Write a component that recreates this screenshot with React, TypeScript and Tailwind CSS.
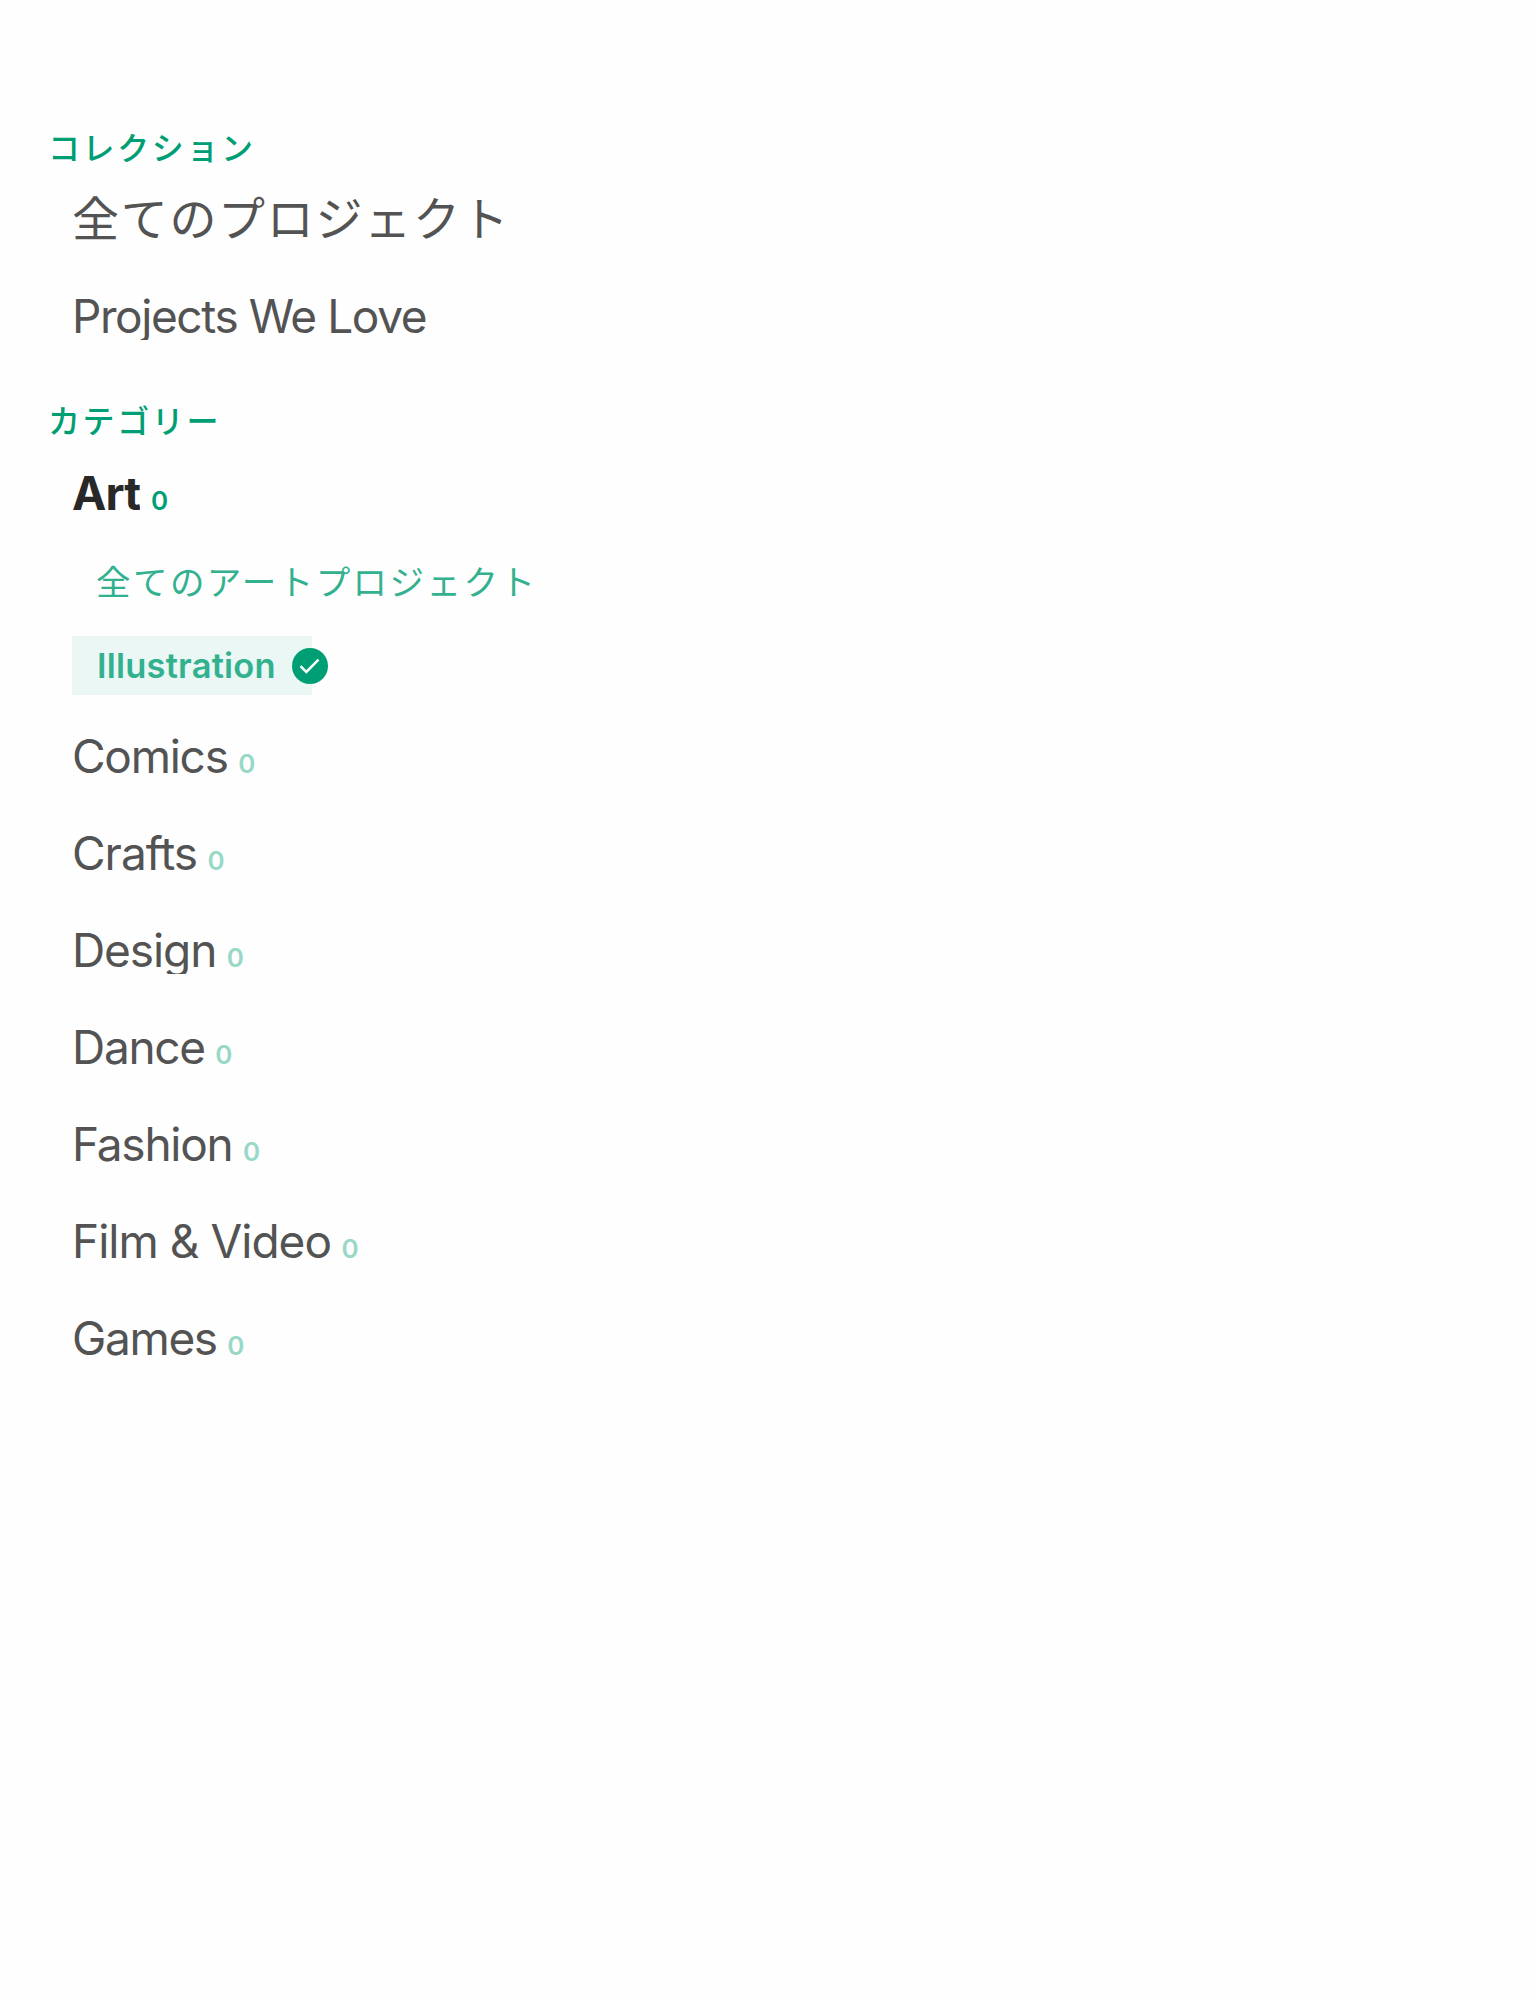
type Row = { label: string; className: string };

const categories: Row[] = [
  { label: "Comics", className: "tracking-[-1.25px]" },
  { label: "Crafts", className: "tracking-[-1px]" },
  { label: "Design", className: "tracking-[-1.1px]" },
  { label: "Dance", className: "tracking-[-1.3px]" },
  { label: "Fashion", className: "tracking-[-1.25px]" },
  { label: "Film & Video", className: "tracking-[-0.97px]" },
  { label: "Games", className: "tracking-[-1.35px]" },
];

function Heading({ children }: { children: string }) {
  return (
    <h2 className="h-10 text-[32px] leading-10 font-medium tracking-[2.6px] text-[#009e74]">
      {children}
    </h2>
  );
}

function Label({ children, className }: { children: string; className: string }) {
  return (
    <span className={`block h-12 overflow-hidden leading-[48px] ${className}`}>
      {children}
    </span>
  );
}

function Count({ className }: { className: string }) {
  return (
    <span className={`ml-[10.5px] text-[26px] leading-8 font-semibold tracking-[-0.5px] ${className}`}>
      0
    </span>
  );
}

function CheckBadge() {
  return (
    <svg viewBox="0 0 36 36" className="absolute top-3 left-[220px] size-9" fill="none">
      <circle cx="18" cy="18" r="18" fill="#009e74" />
      <path d="M8.5 18.2 14.3 23.9 26.5 11.7" stroke="#fff" strokeWidth="2.5" />
    </svg>
  );
}

export default function App() {
  return (
    <nav className="min-h-[2000px] bg-[#fefefe] pt-[129px] pl-12 font-['Inter','Noto_Sans_CJK_JP',sans-serif] text-[46px] whitespace-nowrap text-[#535353]">
      <Heading>コレクション</Heading>
      <ul className="mt-[26px] flex flex-col gap-[49px] pl-6">
        <li className="h-12">
          <Label className="text-[47px] tracking-[1.7px]">全てのプロジェクト</Label>
        </li>
        <li className="h-12">
          <Label className="tracking-[-1.42px]">Projects We Love</Label>
        </li>
      </ul>

      <div className="mt-[62px]">
        <Heading>カテゴリー</Heading>
      </div>
      <div className="mt-[27px] pl-6">
        <div className="flex h-12 items-baseline">
          <Label className="font-[650] tracking-[-0.8px] text-[#282828]">Art</Label>
          <Count className="ml-3 text-[#009e74]" />
        </div>
        <ul className="mt-9 flex flex-col gap-6 text-[34.5px] leading-[59px] text-[#33b18f]">
          <li className="h-[59px] pl-6 tracking-[2.45px]">全てのアートプロジェクト</li>
          <li className="relative h-[59px] w-60 bg-[#ebf7f4] pl-[25px] font-semibold tracking-[0.2px]">
            Illustration
            <CheckBadge />
          </li>
        </ul>
        <ul className="mt-[37px] flex flex-col gap-[49px]">
          {categories.map((c) => (
            <li key={c.label} className="flex h-12 items-baseline">
              <Label className={c.className}>{c.label}</Label>
              <Count className="text-[#99d8c7]" />
            </li>
          ))}
        </ul>
      </div>
    </nav>
  );
}
